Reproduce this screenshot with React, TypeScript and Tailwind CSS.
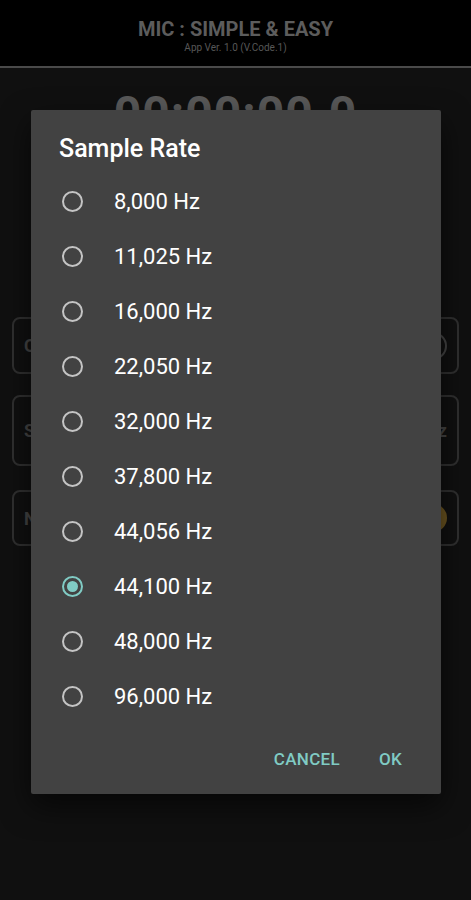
const rates = [
  '8,000 Hz',
  '11,025 Hz',
  '16,000 Hz',
  '22,050 Hz',
  '32,000 Hz',
  '37,800 Hz',
  '44,056 Hz',
  '44,100 Hz',
  '48,000 Hz',
  '96,000 Hz',
];

function Radio({ checked }: { checked: boolean }) {
  return (
    <span
      className={`flex h-[21px] w-[21px] shrink-0 items-center justify-center rounded-full border-2 ${
        checked ? 'border-[#80cbc4]' : 'border-[#c4c4c4]'
      }`}
    >
      {checked && <span className="h-[11px] w-[11px] rounded-full bg-[#80cbc4]" />}
    </span>
  );
}

function Background() {
  return (
    <div className="flex h-full flex-col bg-[#101010]">
      <header className="flex h-[66px] flex-col items-center justify-center bg-black pt-[6px]">
        <h1 className="text-[20px] font-bold leading-[24px] text-[#5c5c5c]">MIC : SIMPLE &amp; EASY</h1>
        <p className="text-[10px] leading-[14px] text-[#575757]">App Ver. 1.0 (V.Code.1)</p>
      </header>
      <div className="h-[2px] bg-[#4a4a4a]" />
      <div className="flex justify-center pt-[18px]">
        <span className="text-[48px] font-bold leading-[56px] tracking-[1px] text-[#595959]">00:00:00.0</span>
      </div>
      <div className="mx-[12px] mt-[175px] flex flex-col">
        <div className="flex h-[57px] items-center justify-between rounded-lg border-2 border-[#303030] px-[10px] text-[#444]">
          <span className="text-[18px] font-bold">C</span>
          <span className="h-[28px] w-[28px] rounded-full border-2 border-[#444]" />
        </div>
        <div className="mt-[21px] flex h-[71px] items-center justify-between rounded-lg border-2 border-[#303030] px-[10px] text-[#444]">
          <span className="text-[18px] font-bold">S</span>
          <span className="text-[18px] font-bold">z</span>
        </div>
        <div className="mt-[24px] flex h-[56px] items-center justify-between rounded-lg border-2 border-[#303030] px-[10px] text-[#444]">
          <span className="text-[18px] font-bold">N</span>
          <span className="h-[28px] w-[28px] rounded-full bg-[#6b5420]" />
        </div>
      </div>
    </div>
  );
}

export default function App() {
  const selected = '44,100 Hz';
  return (
    <div
      className="relative h-[900px] w-[471px] overflow-hidden"
      style={{ fontFamily: 'Roboto, "Noto Sans", sans-serif' }}
    >
      <Background />
      <div className="absolute left-[31px] top-[110px] flex h-[684px] w-[410px] flex-col rounded-[2px] bg-[#424242] shadow-[0_12px_30px_rgba(0,0,0,0.6)]">
        <h2 className="px-[28px] pt-[24px] text-[25px] font-medium leading-[30px] text-white">Sample Rate</h2>
        <ul className="mt-[10px] flex flex-col">
          {rates.map((r) => (
            <li key={r} className="flex h-[55px] items-center gap-[31px] px-[31px]">
              <Radio checked={r === selected} />
              <span className="text-[22px] leading-[26px] text-white">{r}</span>
            </li>
          ))}
        </ul>
        <div className="mt-[18px] flex justify-end gap-[23px] pr-[31px]">
          <button type="button" className="h-[36px] px-[8px] text-[17px] font-medium tracking-[0.3px] text-[#80cbc4]">
            CANCEL
          </button>
          <button type="button" className="h-[36px] px-[8px] text-[17px] font-medium tracking-[0.3px] text-[#80cbc4]">
            OK
          </button>
        </div>
      </div>
    </div>
  );
}
